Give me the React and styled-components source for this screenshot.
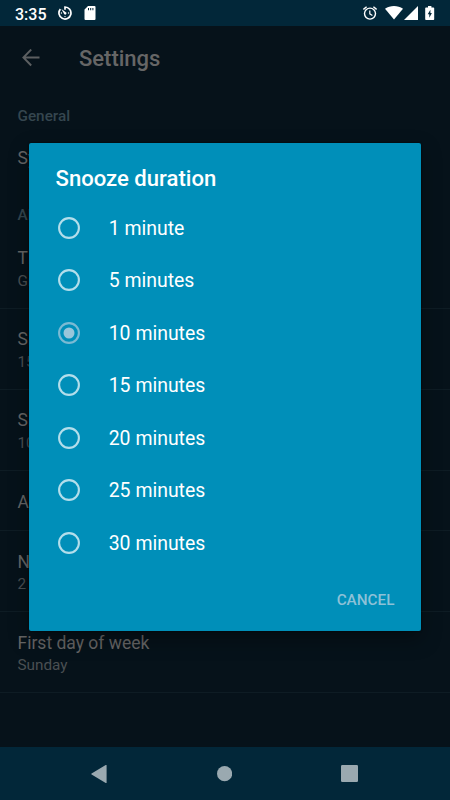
import React from "react"
import styled, { createGlobalStyle } from "styled-components"

const durations = [1, 5, 10, 15, 20, 25, 30]

const preferences = [
  { header: "General" },
  { title: "System", plain: true },
  { header: "Alarms" },
  { title: "Theme", summary: "Green" },
  { title: "Silence", summary: "15 min" },
  { title: "Snooze", summary: "10 min" },
  { title: "Alert" },
  { title: "Notify", summary: "2 hours" },
  { title: "First day of week", summary: "Sunday" },
]

const StatusBar = () => (
  <StyledStatus>
    <span className="time">3:35</span>
    <svg className="timer" width="14" height="14" viewBox="0 0 14 14">
      <path
        d="M7 3.8V1A6 6 0 1 1 2.4 3.1"
        fill="none"
        stroke="white"
        strokeWidth="1.7"
      />
      <path d="M3.4 3.1 8.1 6.5A1.2 1.2 0 0 1 6.3 8.2Z" fill="white" />
      <circle cx="10.6" cy="7" r=".7" fill="white" />
      <circle cx="3.4" cy="7" r=".7" fill="white" />
      <circle cx="7" cy="10.6" r=".7" fill="white" />
    </svg>
    <svg className="card" width="12" height="14" viewBox="0 0 12 14">
      <path
        fillRule="evenodd"
        d="M4 0h6.5a1 1 0 0 1 1 1v12a1 1 0 0 1-1 1h-9a1 1 0 0 1-1-1V3.5ZM4 2v2.3h1V2ZM6.2 2v2.3h1V2ZM8.4 2v2.3h1V2Z"
        fill="white"
      />
    </svg>
    <svg className="alarm" width="14" height="14" viewBox="0 0 14 14">
      <g fill="none" stroke="white" strokeWidth="1.4">
        <circle cx="7" cy="7.6" r="5.5" />
        <path d="M.4 3.4 3.6.7M13.6 3.4 10.4.7" />
        <path d="M6.8 4.4v3.4l2.6 1.6" strokeWidth="1.2" />
      </g>
    </svg>
    <svg className="wifi" width="18" height="14" viewBox="0 0 18 14">
      <path d="M0 2.7C5.2-.9 12.8-.9 18 2.7L9 13.6Z" fill="white" />
    </svg>
    <svg className="signal" width="14" height="14" viewBox="0 0 14 14">
      <path d="M14 0v14H0Z" fill="white" />
    </svg>
    <svg className="battery" width="10" height="14" viewBox="0 0 10 14">
      <path
        fillRule="evenodd"
        d="M3 0h3.4v1.4h2a.8.8 0 0 1 .8.8v11a.8.8 0 0 1-.8.8H1a.8.8 0 0 1-.8-.8v-11A.8.8 0 0 1 1 1.4h2ZM5.4 3.8 2.7 8.3h1.6v3.4L6.9 7H5.4Z"
        fill="white"
      />
    </svg>
  </StyledStatus>
)

const Preference = ({ title, summary, plain }) => (
  <Row $plain={plain} $single={!summary}>
    <div className="title">{title}</div>
    {summary && <div className="summary">{summary}</div>}
  </Row>
)

const SnoozeDialog = () => (
  <StyledDialog role="dialog">
    <h2>Snooze duration</h2>
    <ul>
      {durations.map((n) => (
        <Option key={n} $checked={n === 10}>
          <svg width="22" height="22" viewBox="0 0 22 22">
            <circle className="ring" cx="11" cy="11" r="9.9" />
            {n === 10 && <circle className="dot" cx="11" cy="11" r="5.5" />}
          </svg>
          <span>
            {n} {n === 1 ? "minute" : "minutes"}
          </span>
        </Option>
      ))}
    </ul>
    <Cancel>CANCEL</Cancel>
  </StyledDialog>
)

const App = () => {
  return (
    <>
      <GlobalStyle />
      <Screen>
        <StatusBar />
        <Toolbar>
          <svg width="18" height="18" viewBox="0 0 18 18">
            <path
              d="M17.5 8.5H1.7M9.2.5 1.4 8.5l7.8 8"
              fill="none"
              stroke="#5c5f61"
              strokeWidth="1.9"
            />
          </svg>
          <h1>Settings</h1>
        </Toolbar>
        <List>
          {preferences.map((item) =>
            item.header ? (
              <Header key={item.header}>{item.header}</Header>
            ) : (
              <Preference key={item.title} {...item} />
            )
          )}
        </List>
        <NavBar>
          <svg width="16" height="18" viewBox="0 0 16 18">
            <path d="M15.6.3v17.4a.6.6 0 0 1-.9.2L.6 9.5a.6.6 0 0 1 0-1L14.7.1a.6.6 0 0 1 .9.2Z" />
          </svg>
          <svg width="16" height="16" viewBox="0 0 16 16">
            <circle cx="8.6" cy="7.7" r="7.6" />
          </svg>
          <svg width="17" height="17" viewBox="0 0 17 17">
            <rect width="17" height="17" rx="1.2" />
          </svg>
        </NavBar>
        <SnoozeDialog />
      </Screen>
    </>
  )
}

const GlobalStyle = createGlobalStyle`
  * {
    box-sizing: border-box;
    margin: 0;
    padding: 0;
  }

  body {
    background: #06121a;
    font-family: Roboto, sans-serif;
  }
`

const Screen = styled.div`
  position: relative;
  width: 450px;
  height: 800px;
  display: flex;
  flex-direction: column;
  overflow: hidden;
  background: #06121a;
`

const StyledStatus = styled.div`
  height: 26px;
  flex: none;
  display: flex;
  align-items: center;
  padding: 0 15px;
  background: #022739;
  color: white;

  .time {
    width: 43px;
    font-size: 16px;
    font-weight: 500;
    line-height: 26px;
    padding-top: 3px;
  }

  .card {
    margin-left: 12px;
  }

  .alarm {
    margin-left: auto;
  }

  .wifi {
    margin-left: 8px;
  }

  .signal {
    margin-left: 1px;
  }

  .battery {
    margin-left: 7px;
  }
`

const Toolbar = styled.header`
  height: 64px;
  flex: none;
  display: flex;
  align-items: center;
  padding-left: 22px;
  color: #666666;

  h1 {
    margin-left: 39px;
    font-size: 22px;
    font-weight: 500;
  }
`

const List = styled.main`
  flex: 1;
  overflow: hidden;
`

const Header = styled.div`
  height: 39px;
  padding: 17.4px 17.5px 0;
  color: #35464f;
  font-size: 15.3px;
  font-weight: 500;
  line-height: 18px;
`

const Row = styled.div`
  height: ${(p) => (p.$plain ? 59.5 : p.$single ? 60 : 81.2)}px;
  padding: ${(p) => (p.$plain ? 18 : 19.5)}px 17.5px 0;
  border-bottom: 1px solid ${(p) => (p.$plain ? "transparent" : "#0e1c24")};

  .title {
    color: #666666;
    font-size: 17.5px;
    line-height: 22px;
  }

  .summary {
    margin-top: 1.6px;
    color: #4a4f52;
    font-size: 15.3px;
    line-height: 20px;
  }
`

const NavBar = styled.nav`
  height: 53px;
  flex: none;
  display: flex;
  align-items: center;
  justify-content: space-between;
  padding: 0 92px 0 91px;
  background: #022739;
  fill: #9aa9b0;
`

const StyledDialog = styled.section`
  position: absolute;
  top: 143px;
  left: 29px;
  width: 392px;
  height: 487.5px;
  display: flex;
  flex-direction: column;
  border-radius: 2px;
  background: #008fb9;
  box-shadow: 0 8px 20px rgba(0, 0, 0, 0.35), 0 0 2px rgba(0, 0, 0, 0.8);
  color: white;

  h2 {
    padding: 21.4px 26.5px 0;
    font-size: 22.1px;
    font-weight: 500;
    line-height: 28px;
  }

  ul {
    margin-top: 8.9px;
    list-style: none;
  }
`

const Option = styled.li`
  height: 52.5px;
  display: flex;
  align-items: center;
  padding-left: 28.7px;
  font-size: 19.45px;

  svg {
    margin-right: 29px;
  }

  span {
    padding-top: 1.5px;
  }

  .ring {
    fill: none;
    stroke: ${(p) => (p.$checked ? "#7bbad3" : "#b3deeb")};
    stroke-width: 2.1;
  }

  .dot {
    fill: #99c6da;
  }
`

const Cancel = styled.button`
  align-self: flex-end;
  margin: 11px 26.5px 0 0;
  border: 0;
  background: none;
  color: #8dc1d7;
  font: 500 15.3px Roboto, sans-serif;
  line-height: 40px;
`

export default App
